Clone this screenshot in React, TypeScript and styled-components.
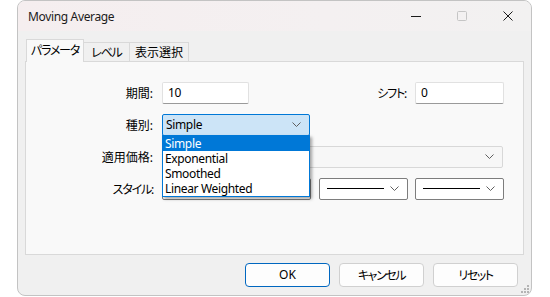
import React from 'react';
import styled, { createGlobalStyle } from 'styled-components';

const GlobalStyle = createGlobalStyle`
  html, body {
    margin: 0;
    padding: 0;
    background: #ffffff;
  }
  body {
    font-family: "Segoe UI", "Noto Sans", "Noto Sans CJK JP", sans-serif;
    font-size: 12px;
    color: #000;
    font-feature-settings: "palt";
  }
  * {
    box-sizing: border-box;
  }
`;

const Window = styled.div`
  position: relative;
  width: 515px;
  height: 296px;
  margin-left: 17px;
  border: 1px solid #c3c3c3;
  border-radius: 8px;
  background: #f0f0f0;
  display: flex;
  flex-direction: column;
  overflow: hidden;
`;

const TitleBar = styled.div`
  height: 30px;
  display: flex;
  align-items: center;
  background: linear-gradient(90deg, #f5eeef 0%, #f4f0f1 60%, #f2f1f1 100%);
`;

const Title = styled.div`
  flex: 1;
  padding-left: 10px;
  color: #1b1b1b;
  font-size: 12px;
  letter-spacing: -0.35px;
`;

const CaptionButton = styled.div<{ $disabled?: boolean }>`
  width: 46px;
  height: 30px;
  display: flex;
  align-items: center;
  justify-content: center;
  color: ${(p) => (p.$disabled ? '#c5c5c5' : '#1b1b1b')};
`;

const Body = styled.div`
  flex: 1;
  display: flex;
  flex-direction: column;
  padding: 8px 7px 0;
`;

const TabStrip = styled.div`
  position: relative;
  z-index: 1;
  height: 23px;
  margin-bottom: -1px;
  padding-left: 1px;
  display: flex;
  align-items: flex-end;
`;

const Tab = styled.div<{ $active?: boolean; $w: number; $kana?: boolean }>`
  width: ${(p) => p.$w}px;
  height: ${(p) => (p.$active ? 23 : 20)}px;
  display: flex;
  align-items: center;
  justify-content: center;
  padding-bottom: ${(p) => (p.$active ? 2 : 0)}px;
  border: 1px solid #d9d9d9;
  border-bottom: ${(p) => (p.$active ? 'none' : '1px solid #d9d9d9')};
  margin-left: ${(p) => (p.$active ? 0 : -1)}px;
  background: ${(p) => (p.$active ? '#f9f9f9' : '#f0f0f0')};
  color: #000;
  letter-spacing: ${(p) => (p.$kana ? '-1.2px' : '0')};
`;

const Panel = styled.div`
  height: 194px;
  border: 1px solid #d9d9d9;
  background: #f9f9f9;
  padding: 20px 19px 0 0;
  display: flex;
  flex-direction: column;
  gap: 10px;
`;

const Row = styled.div`
  height: 22px;
  display: flex;
  align-items: center;
`;

const Label = styled.div<{ $w?: number; $kana?: boolean }>`
  width: ${(p) => p.$w ?? 127}px;
  margin-right: 9px;
  text-align: right;
  white-space: nowrap;
  letter-spacing: ${(p) => (p.$kana ? '-1.2px' : '0')};
`;

const Spacer = styled.div`
  flex: 1;
`;

const TextInput = styled.input<{ $w: number }>`
  width: ${(p) => p.$w}px;
  height: 22px;
  padding: 0 0 1px 5px;
  border: 1px solid #e1e1e1;
  border-bottom-color: #9a9a9a;
  border-radius: 2px;
  background: #fff;
  font: inherit;
  letter-spacing: -0.35px;
  color: #000;
  outline: none;
`;

const ComboWrap = styled.div`
  position: relative;
`;

const Combo = styled.div<{ $w: number; $variant?: 'focus' | 'disabled' | 'normal' }>`
  width: ${(p) => p.$w}px;
  height: 22px;
  display: flex;
  align-items: center;
  padding: 0 8px 1px 3px;
  border-radius: 2px;
  border: 1px solid
    ${(p) =>
      p.$variant === 'focus' ? '#0078d7' : p.$variant === 'disabled' ? '#d8d8d8' : '#7d7d7d'};
  background: ${(p) =>
    p.$variant === 'focus' ? '#cce4f7' : p.$variant === 'disabled' ? '#f7f7f7' : '#ffffff'};
  color: #000;
  letter-spacing: -0.35px;
`;

const ComboValue = styled.div`
  flex: 1;
  display: flex;
  align-items: center;
`;

const LineSample = styled.div`
  width: 57px;
  height: 1px;
  margin-left: 4px;
  background: #000;
`;

const DropList = styled.div`
  position: absolute;
  z-index: 5;
  top: 100%;
  left: 0;
  width: 148px;
  margin-top: -1px;
  border: 1px solid #0078d7;
  background: #fff;
  box-shadow: 2px 2px 3px rgba(0, 0, 0, 0.35);
`;

const DropItem = styled.div<{ $selected?: boolean }>`
  height: 15px;
  line-height: 14px;
  padding: 1px 0 0 2px;
  background: ${(p) => (p.$selected ? '#0078d7' : 'transparent')};
  color: ${(p) => (p.$selected ? '#fff' : '#000')};
  white-space: nowrap;
  letter-spacing: -0.35px;
`;

const Footer = styled.div`
  height: 40px;
  display: flex;
  justify-content: flex-end;
  align-items: flex-start;
  gap: 9px;
  padding: 8px 13px 0 0;
`;

const Button = styled.div<{ $primary?: boolean; $kana?: boolean }>`
  width: 85px;
  height: 24px;
  display: flex;
  align-items: center;
  justify-content: center;
  padding-bottom: 1px;
  border-radius: 4px;
  border: 1px solid ${(p) => (p.$primary ? '#0067c0' : '#d0d0d0')};
  background: #fdfdfd;
  color: #000;
  letter-spacing: ${(p) => (p.$kana ? '-1.4px' : '0')};
`;

const Grip = styled.svg`
  position: absolute;
  right: 2px;
  bottom: 2px;
`;

const Chevron = () => (
  <svg width="9" height="5" viewBox="0 0 9 5">
    <path d="M0.5 0.5 L4.5 4.5 L8.5 0.5" fill="none" stroke="#5f5f5f" strokeWidth="1" />
  </svg>
);

const types = ['Simple', 'Exponential', 'Smoothed', 'Linear Weighted'];

export default function App() {
  return (
    <>
      <GlobalStyle />
      <Window>
        <TitleBar>
          <Title>Moving Average</Title>
          <CaptionButton>
            <svg width="10" height="10" viewBox="0 0 10 10">
              <path d="M0 5.5 H10" stroke="currentColor" strokeWidth="1" />
            </svg>
          </CaptionButton>
          <CaptionButton $disabled>
            <svg width="10" height="10" viewBox="0 0 10 10">
              <rect x="0.5" y="0.5" width="9" height="9" rx="1" fill="none" stroke="currentColor" />
            </svg>
          </CaptionButton>
          <CaptionButton>
            <svg width="10" height="10" viewBox="0 0 10 10">
              <path d="M0.5 0.5 L9.5 9.5 M9.5 0.5 L0.5 9.5" stroke="currentColor" strokeWidth="1" />
            </svg>
          </CaptionButton>
        </TitleBar>
        <Body>
          <TabStrip>
            <Tab $active $kana $w={58}>パラメータ</Tab>
            <Tab $kana $w={47}>レベル</Tab>
            <Tab $w={60}>表示選択</Tab>
          </TabStrip>
          <Panel>
            <Row>
              <Label>期間:</Label>
              <TextInput $w={87} value="10" readOnly />
              <Spacer />
              <Label $w={60} $kana>シフト:</Label>
              <TextInput $w={89} value="0" readOnly />
            </Row>
            <Row>
              <Label>種別:</Label>
              <ComboWrap>
                <Combo $w={148} $variant="focus">
                  <ComboValue>Simple</ComboValue>
                  <Chevron />
                </Combo>
                <DropList>
                  {types.map((t, i) => (
                    <DropItem key={t} $selected={i === 0}>
                      {t}
                    </DropItem>
                  ))}
                </DropList>
              </ComboWrap>
            </Row>
            <Row>
              <Label>適用価格:</Label>
              <Combo $w={341} $variant="disabled">
                <ComboValue />
                <Chevron />
              </Combo>
            </Row>
            <Row>
              <Label $kana>スタイル:</Label>
              <Combo $w={149}>
                <ComboValue />
                <Chevron />
              </Combo>
              <Spacer />
              <Combo $w={89}>
                <ComboValue>
                  <LineSample />
                </ComboValue>
                <Chevron />
              </Combo>
              <Spacer />
              <Combo $w={89}>
                <ComboValue>
                  <LineSample />
                </ComboValue>
                <Chevron />
              </Combo>
            </Row>
          </Panel>
        </Body>
        <Footer>
          <Button $primary>OK</Button>
          <Button $kana>キャンセル</Button>
          <Button $kana>リセット</Button>
        </Footer>
        <Grip width="8" height="8" viewBox="0 0 8 8">
          {[
            [6, 0],
            [6, 3],
            [3, 3],
            [6, 6],
            [3, 6],
            [0, 6],
          ].map(([x, y]) => (
            <rect key={`${x}-${y}`} x={x} y={y} width="2" height="2" fill="#b4b4b4" />
          ))}
        </Grip>
      </Window>
    </>
  );
}
